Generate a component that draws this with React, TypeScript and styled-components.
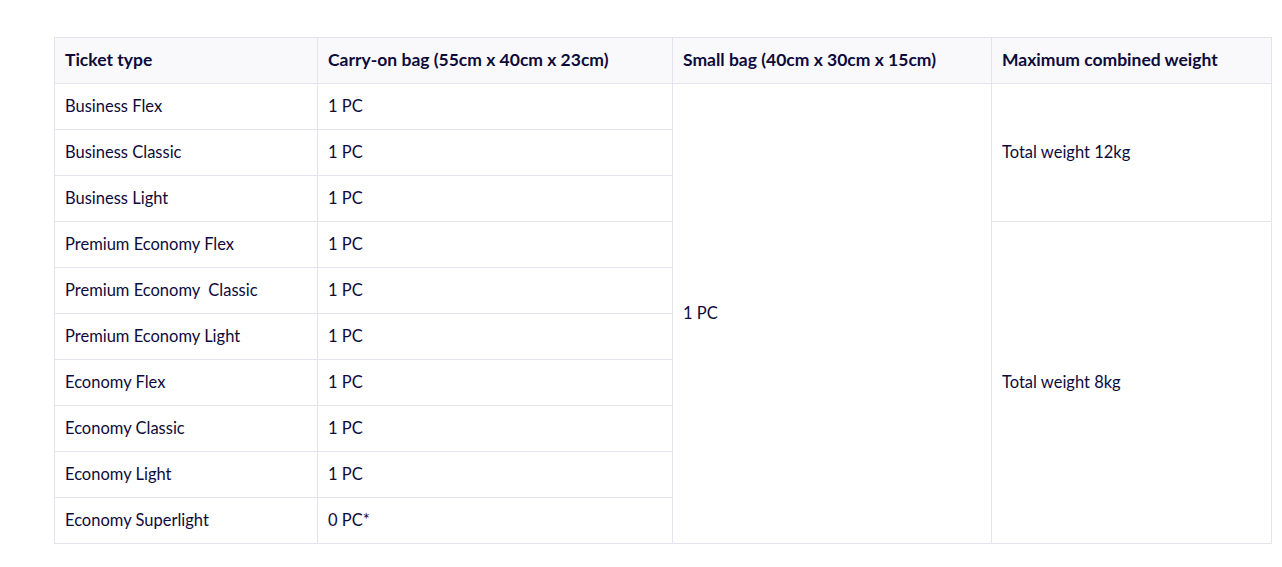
import React from 'react';
import styled, { createGlobalStyle } from 'styled-components';

const rows = [
  { type: 'Business Flex', carry: '1 PC' },
  { type: 'Business Classic', carry: '1 PC' },
  { type: 'Business Light', carry: '1 PC' },
  { type: 'Premium Economy Flex', carry: '1 PC' },
  { type: 'Premium Economy  Classic', carry: '1 PC' },
  { type: 'Premium Economy Light', carry: '1 PC' },
  { type: 'Economy Flex', carry: '1 PC' },
  { type: 'Economy Classic', carry: '1 PC' },
  { type: 'Economy Light', carry: '1 PC' },
  { type: 'Economy Superlight', carry: '0 PC*' },
];

export default function App() {
  return (
    <>
      <GlobalStyle />
      <Page>
        <Table>
          <colgroup>
            <col style={{ width: 263 }} />
            <col style={{ width: 355 }} />
            <col style={{ width: 319 }} />
            <col style={{ width: 280 }} />
          </colgroup>
          <thead>
            <tr>
              <Th>Ticket type</Th>
              <Th>Carry-on bag (55cm x 40cm x 23cm)</Th>
              <Th>Small bag (40cm x 30cm x 15cm)</Th>
              <Th>Maximum combined weight</Th>
            </tr>
          </thead>
          <tbody>
            {rows.map((r, i) => (
              <tr key={r.type}>
                <Td>{r.type}</Td>
                <Td>{r.carry}</Td>
                {i === 0 && <Td rowSpan={10}>1 PC</Td>}
                {i === 0 && <Td rowSpan={3}>Total weight 12kg</Td>}
                {i === 3 && <Td rowSpan={7}>Total weight 8kg</Td>}
              </tr>
            ))}
          </tbody>
        </Table>
      </Page>
    </>
  );
}

const GlobalStyle = createGlobalStyle`
  body {
    margin: 0;
    background: #ffffff;
    font-family: Lato, "Open Sans", Arial, sans-serif;
    color: #0e0b3b;
  }
`;

const Page = styled.div`
  padding: 37px 0 0 54px;
`;

const Table = styled.table`
  border-collapse: collapse;
  table-layout: fixed;
  width: 1217px;
  white-space: pre;
`;

const Th = styled.th`
  height: 46px;
  padding: 0 10px 2px;
  text-align: left;
  font-size: 17.5px;
  font-weight: 700;
  background: #f9f9fb;
  border: 1px solid #e4e3ee;
  box-sizing: border-box;
  letter-spacing: 0;
`;

const Td = styled.td`
  height: 46px;
  padding: 0 10px 2px;
  text-align: left;
  font-size: 16.5px;
  font-weight: 400;
  border: 1px solid #e4e3ee;
  box-sizing: border-box;
  vertical-align: middle;
  letter-spacing: 0;
`;
